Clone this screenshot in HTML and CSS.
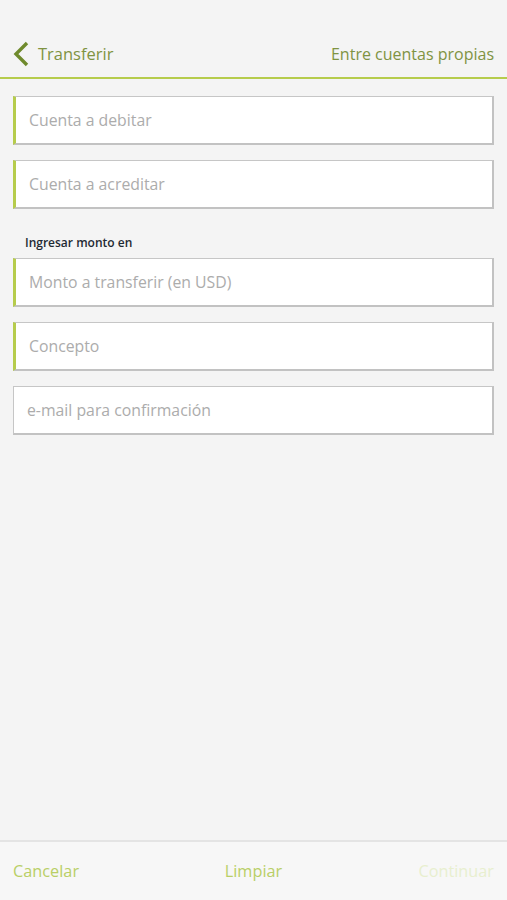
FILE: index.html
```html
<!DOCTYPE html>
<html lang="es">
<head>
    <meta charset="UTF-8">
    <title>Transferir</title>

    <link rel="stylesheet" href="styles.css">
</head>
<body>

<div class="screen">
    <div class="top-bar">
        <a class="back" href="#">
            <svg class="chevron" width="16" height="26" viewBox="0 0 16 26">
                <path d="M14 2 L3 13 L14 24" fill="none" stroke="#6f8a2c" stroke-width="3.4"/>
            </svg>
            <span>Transferir</span>
        </a>
        <span class="title">Entre cuentas propias</span>
    </div>

    <form class="form">
        <div class="field req">Cuenta a debitar</div>
        <div class="field req">Cuenta a acreditar</div>

        <p class="label">Ingresar monto en</p>
        <div class="field req">Monto a transferir (en USD)</div>
        <div class="field req">Concepto</div>
        <div class="field">e-mail para confirmación</div>
    </form>

    <div class="bottom-bar">
        <button class="act">Cancelar</button>
        <button class="act mid">Limpiar</button>
        <button class="act off">Continuar</button>
    </div>
</div>

</body>
</html>
```

FILE: styles.css
```css
* {
    margin: 0;
    padding: 0;
    box-sizing: border-box;
}

body {
    background: #f4f4f4;
    font-family: "Open Sans", "Liberation Sans", sans-serif;
}

.screen {
    display: flex;
    flex-direction: column;
    height: 900px;
}

.top-bar {
    display: flex;
    justify-content: space-between;
    align-items: center;
    height: 79px;
    padding: 30px 13px 0 13px;
    border-bottom: 2px solid #b6cc4c;
}

.top-bar .back {
    display: flex;
    align-items: center;
    gap: 9px;
    text-decoration: none;
    color: #7f9342;
    font-size: 16.5px;
}

.top-bar .title {
    color: #7f9342;
    font-size: 16px;
}

.form {
    flex: 1;
    padding: 17px 13px 0;
}

.field {
    height: 49px;
    margin-bottom: 15px;
    padding: 0 13px;
    display: flex;
    align-items: center;
    background: #fff;
    border: 1px solid #c6c6c6;
    border-right: 2px solid #c2c2c2;
    border-bottom: 2px solid #c2c2c2;
    color: #acacac;
    font-size: 15.8px;
}

.field.req {
    border-left: 3px solid #b6cc4c;
}

.label {
    margin: 25px 0 7px 12px;
    color: #1f2a33;
    font-size: 12px;
    font-weight: 600;
}

.bottom-bar {
    display: grid;
    grid-template-columns: 1fr auto 1fr;
    align-items: center;
    height: 60px;
    padding: 0 13px;
    background: #f7f7f7;
    border-top: 2px solid #e4e4e4;
}

.bottom-bar .act {
    border: none;
    background: none;
    color: #b9cf66;
    font-family: inherit;
    font-size: 16.3px;
    justify-self: start;
}

.bottom-bar .act.mid {
    justify-self: center;
}

.bottom-bar .act.off {
    justify-self: end;
    color: #e8efcf;
}
```
